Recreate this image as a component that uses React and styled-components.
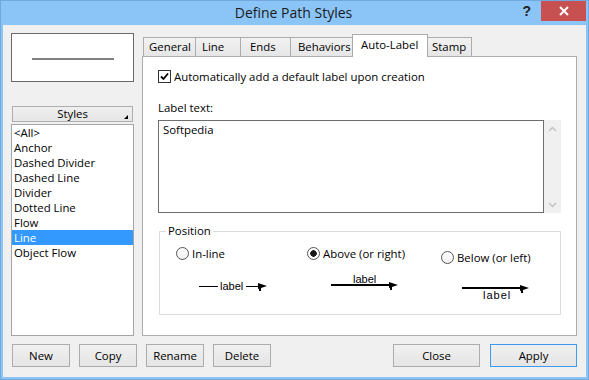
import React from "react";
import styled, { createGlobalStyle } from "styled-components";

const GlobalStyle = createGlobalStyle`
  html, body {
    margin: 0;
    padding: 0;
    background: #8bc5f8;
  }
  body {
    font-family: "Segoe UI", "Open Sans", "Liberation Sans", sans-serif;
    font-size: 11.4px;
    color: #000;
  }
  * {
    box-sizing: border-box;
  }
`;

const styleNames = [
  "<All>",
  "Anchor",
  "Dashed Divider",
  "Dashed Line",
  "Divider",
  "Dotted Line",
  "Flow",
  "Line",
  "Object Flow",
];

const tabs = [
  { name: "General", w: 53, pl: 5 },
  { name: "Line", w: 46, pl: 6 },
  { name: "Ends", w: 51, pl: 9 },
  { name: "Behaviors", w: 63, pl: 7 },
  { name: "Auto-Label", w: 76, pl: 8, active: true },
  { name: "Stamp", w: 45, pl: 4 },
];

const Arrow = ({ x, y }) => (
  <>
    <polygon points={`${x - 9},${y - 3} ${x},${y} ${x - 9},${y + 3}`} fill="#000" />
    <rect x={x - 8} y={y + 2} width="2" height="3" fill="#000" />
  </>
);

const Diagram = ({ kind }) => {
  if (kind === "inline") {
    return (
      <DiagramSvg width="70" height="28" $ml={23}>
        <rect x="0" y="14" width="19" height="1" fill="#000" />
        <text x="21" y="18" fontSize="11" fontFamily="Liberation Sans, sans-serif">
          label
        </text>
        <rect x="47" y="14" width="15" height="1" fill="#000" />
        <Arrow x={68} y={14} />
      </DiagramSvg>
    );
  }
  if (kind === "above") {
    return (
      <DiagramSvg width="70" height="28" $ml={24}>
        <text x="22" y="11" fontSize="11" fontFamily="Liberation Sans, sans-serif">
          label
        </text>
        <rect x="0" y="12" width="60" height="2" fill="#000" />
        <Arrow x={67} y={13} />
      </DiagramSvg>
    );
  }
  return (
    <DiagramSvg width="70" height="28" $ml={21}>
      <rect x="0" y="11" width="60" height="2" fill="#000" />
      <Arrow x={67} y={12} />
      <text x="21" y="23" fontSize="11" fontFamily="Liberation Sans, sans-serif" letterSpacing="1">
        label
      </text>
    </DiagramSvg>
  );
};

const options = [
  { label: "In-line", kind: "inline", top: 0 },
  { label: "Above (or right)", kind: "above", top: 0, checked: true },
  { label: "Below (or left)", kind: "below", top: 4 },
];

export default function App() {
  return (
    <>
      <GlobalStyle />
      <Window>
        <TitleBar>
          <span />
          <Title>Define Path Styles</Title>
          <TitleControls>
            <HelpMark>?</HelpMark>
            <CloseButton>
              <svg width="10" height="10" viewBox="0 0 10 10">
                <path d="M1 1 L9 9 M9 1 L1 9" stroke="#fff" strokeWidth="2" />
              </svg>
            </CloseButton>
          </TitleControls>
        </TitleBar>

        <Body>
          <TopSection>
            <LeftColumn>
              <Preview>
                <PreviewLine />
              </Preview>
              <StylesHeader>Styles</StylesHeader>
              <StyleList>
                {styleNames.map((name) => (
                  <StyleItem key={name} $selected={name === "Line"}>
                    {name}
                  </StyleItem>
                ))}
              </StyleList>
            </LeftColumn>

            <RightColumn>
              <TabStrip>
                {tabs.map((t) => (
                  <Tab key={t.name} $w={t.w} $pl={t.pl} $active={t.active}>
                    {t.name}
                  </Tab>
                ))}
              </TabStrip>
              <Panel>
                <CheckRow>
                  <CheckBox>
                    <svg width="11" height="11" viewBox="0 0 11 11">
                      <path d="M2 5.5 L4.5 8 L9 2.5" stroke="#000" strokeWidth="1.8" fill="none" />
                    </svg>
                  </CheckBox>
                  <span>Automatically add a default label upon creation</span>
                </CheckRow>
                <Caption>Label text:</Caption>
                <TextRow>
                  <TextBox>Softpedia</TextBox>
                  <ScrollBar>
                    <ScrollArrow>
                      <svg width="9" height="6" viewBox="0 0 9 6">
                        <path d="M1 5 L4.5 1.5 L8 5" stroke="#c2c2c2" strokeWidth="1.4" fill="none" />
                      </svg>
                    </ScrollArrow>
                    <ScrollArrow>
                      <svg width="9" height="6" viewBox="0 0 9 6">
                        <path d="M1 1 L4.5 4.5 L8 1" stroke="#c2c2c2" strokeWidth="1.4" fill="none" />
                      </svg>
                    </ScrollArrow>
                  </ScrollBar>
                </TextRow>
                <GroupBox>
                  <Legend>Position</Legend>
                  <OptionsGrid>
                    {options.map((o) => (
                      <Option key={o.kind} $top={o.top}>
                        <RadioRow>
                          <Radio $checked={o.checked} />
                          <span>{o.label}</span>
                        </RadioRow>
                        <Diagram kind={o.kind} />
                      </Option>
                    ))}
                  </OptionsGrid>
                </GroupBox>
              </Panel>
            </RightColumn>
          </TopSection>

          <ButtonRow>
            <Button>New</Button>
            <Button>Copy</Button>
            <Button>Rename</Button>
            <Button>Delete</Button>
            <Button $wide $push>
              Close
            </Button>
            <Button $wide $default>
              Apply
            </Button>
          </ButtonRow>
        </Body>
      </Window>
    </>
  );
}

const Window = styled.div`
  width: 589px;
  height: 380px;
  border: 1px solid #72a8de;
  background: #8bc5f8;
  padding: 0 2px 2px;
  display: flex;
  flex-direction: column;
`;

const TitleBar = styled.div`
  height: 24px;
  display: grid;
  grid-template-columns: 1fr auto 1fr;
  align-items: start;
`;

const Title = styled.div`
  font-size: 14px;
  line-height: 24px;
  color: #1a1a1a;
  transform: translateX(-1px);
`;

const TitleControls = styled.div`
  display: flex;
  justify-content: flex-end;
  align-items: flex-start;
`;

const HelpMark = styled.div`
  font-family: "Liberation Sans", sans-serif;
  font-weight: bold;
  font-size: 14px;
  line-height: 20px;
  color: #222;
  margin-right: 10px;
`;

const CloseButton = styled.div`
  width: 45px;
  height: 20px;
  background: #c75050;
  display: flex;
  align-items: center;
  justify-content: center;
`;

const Body = styled.div`
  flex: 1;
  background: #f0f0f0;
  padding: 8px 9px 10px 8px;
  display: flex;
  flex-direction: column;
`;

const TopSection = styled.div`
  flex: 1;
  display: flex;
  gap: 8px;
  min-height: 0;
`;

const LeftColumn = styled.div`
  width: 123px;
  display: flex;
  flex-direction: column;
`;

const Preview = styled.div`
  height: 49px;
  border: 1px solid #6a6a6a;
  background: #fff;
  display: flex;
  align-items: center;
  justify-content: center;
`;

const PreviewLine = styled.div`
  width: 82px;
  height: 2px;
  margin: 3px 0 0 1px;
  background: #808080;
`;

const StylesHeader = styled.div`
  position: relative;
  margin: 24px 1px 0;
  height: 16px;
  border: 1px solid #adadad;
  background: linear-gradient(#efefef, #e6e6e6);
  text-align: center;
  line-height: 14px;

  &::after {
    content: "";
    position: absolute;
    right: 4px;
    bottom: 2px;
    border-style: solid;
    border-width: 0 0 4px 4px;
    border-color: transparent transparent #000 transparent;
  }
`;

const StyleList = styled.div`
  margin-top: 2px;
  flex: 1;
  border: 1px solid #a5a5a5;
  background: #fff;
`;

const StyleItem = styled.div`
  height: 15px;
  line-height: 15px;
  padding-left: 2px;
  white-space: nowrap;
  overflow: hidden;
  background: ${(p) => (p.$selected ? "#3399ff" : "transparent")};
  color: ${(p) => (p.$selected ? "#fff" : "#000")};
`;

const RightColumn = styled.div`
  flex: 1;
  display: flex;
  flex-direction: column;
`;

const TabStrip = styled.div`
  height: 23px;
  display: flex;
  align-items: flex-end;
  padding-left: 1px;
`;

const Tab = styled.div`
  position: relative;
  width: ${(p) => p.$w}px;
  height: ${(p) => (p.$active ? 23 : 19)}px;
  margin-right: -1px;
  margin-bottom: ${(p) => (p.$active ? -1 : 0)}px;
  padding-left: ${(p) => p.$pl}px;
  border: 1px solid #acacac;
  border-bottom: none;
  background: ${(p) => (p.$active ? "#fff" : "linear-gradient(#f2f2f2, #e6e6e6)")};
  z-index: ${(p) => (p.$active ? 2 : 1)};
  line-height: ${(p) => (p.$active ? 20 : 17)}px;
  white-space: nowrap;
`;

const Panel = styled.div`
  flex: 1;
  border: 1px solid #acacac;
  background: #fff;
  padding: 13px 15px 0;
  display: flex;
  flex-direction: column;
`;

const CheckRow = styled.div`
  display: flex;
  align-items: center;
  gap: 3px;
  height: 13px;
  white-space: nowrap;
`;

const CheckBox = styled.div`
  width: 13px;
  height: 13px;
  border: 1px solid #333;
  background: #fff;
  display: flex;
  align-items: center;
  justify-content: center;
`;

const Caption = styled.div`
  margin-top: 17px;
  line-height: 16px;
`;

const TextRow = styled.div`
  margin-top: 4px;
  height: 93px;
  display: flex;
`;

const TextBox = styled.div`
  width: 386px;
  border: 1px solid #6e6e6e;
  padding: 1px 4px;
  line-height: 15px;
`;

const ScrollBar = styled.div`
  width: 17px;
  background: #f0f0f0;
  display: flex;
  flex-direction: column;
  justify-content: space-between;
`;

const ScrollArrow = styled.div`
  height: 17px;
  display: flex;
  align-items: center;
  justify-content: center;
`;

const GroupBox = styled.fieldset`
  margin: 11px 0 0 1px;
  padding: 0 6px;
  width: 402px;
  height: 91px;
  border: 1px solid #dcdcdc;
  min-width: 0;
`;

const Legend = styled.legend`
  padding: 0 2px;
  line-height: 14px;
`;

const OptionsGrid = styled.div`
  display: grid;
  grid-template-columns: 131px 134px 1fr;
  padding: 9px 0 0 10px;
`;

const Option = styled.div`
  display: flex;
  flex-direction: column;
  margin-top: ${(p) => p.$top}px;
`;

const RadioRow = styled.div`
  display: flex;
  align-items: center;
  gap: 3px;
  height: 13px;
  white-space: nowrap;
`;

const Radio = styled.div`
  width: 13px;
  height: 13px;
  border-radius: 50%;
  border: 1px solid #555;
  background: radial-gradient(circle, #1a1a1a 0 3px, #fff 3.5px);
  ${(p) => !p.$checked && "background: linear-gradient(#fdfdfd, #f0f0f0);"}
`;

const DiagramSvg = styled.svg`
  display: block;
  margin: 12px 0 0 ${(p) => p.$ml}px;
  overflow: visible;
`;

const ButtonRow = styled.div`
  margin-top: 8px;
  height: 23px;
  display: flex;
  gap: 9px;
  padding-left: 1px;
`;

const Button = styled.div`
  width: ${(p) => (p.$wide ? 87 : 58)}px;
  height: 23px;
  margin-left: ${(p) => (p.$push ? "auto" : "0")};
  margin-right: ${(p) => (p.$push ? 1 : 0)}px;
  border: 1px solid ${(p) => (p.$default ? "#3c9bf0" : "#acacac")};
  background: linear-gradient(#f0f0f0, #e5e5e5);
  display: flex;
  align-items: center;
  justify-content: center;
`;
